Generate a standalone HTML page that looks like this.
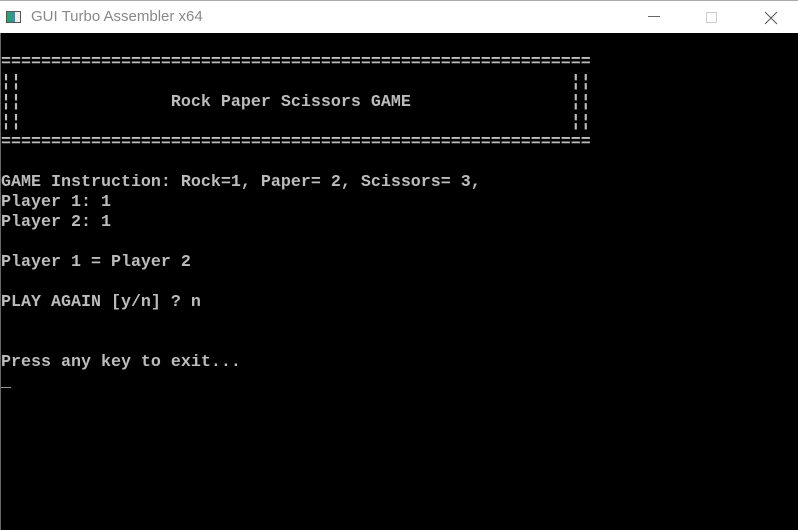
<!DOCTYPE html>
<html><head><style>
html,body{margin:0;padding:0;width:798px;height:530px;overflow:hidden;background:#000}
.tb{position:absolute;left:0;top:0;width:798px;height:33px;background:#fff;border-top:1px solid #aaa;box-sizing:border-box}
.tt{position:absolute;left:31px;top:7px;font:15px "Liberation Sans",sans-serif;color:#888}
.ic{position:absolute;left:6px;top:10px;width:15px;height:12px;border:1px solid #555;box-sizing:border-box;background:linear-gradient(90deg,#2a6 0,#48a 60%,#eee 60%)}
.con{position:absolute;left:0;top:33px;width:798px;height:497px;background:#000;border-left:1px solid #666;box-sizing:border-box}
pre{margin:0;position:absolute;left:0;top:0;font:bold 16.67px/20px "Liberation Mono",monospace;color:#bcbcbc;letter-spacing:0}
</style></head><body>
<div class="tb"><div class="ic"></div><div class="tt">GUI Turbo Assembler x64</div>
<div style="position:absolute;left:648px;top:15px;width:12px;height:1px;background:#666"></div>
<div style="position:absolute;left:706px;top:11px;width:11px;height:11px;border:1px solid #ccc;box-sizing:border-box"></div>
<svg style="position:absolute;left:764px;top:10px" width="14" height="14"><path d="M1 1L13 13M13 1L1 13" stroke="#555" stroke-width="1"/></svg>
</div>
<div class="con"><pre>&nbsp;
===========================================================
¦¦                                                       ¦¦
¦¦               Rock Paper Scissors GAME                ¦¦
¦¦                                                       ¦¦
===========================================================

GAME Instruction: Rock=1, Paper= 2, Scissors= 3,
Player 1: 1
Player 2: 1

Player 1 = Player 2

PLAY AGAIN [y/n] ? n


Press any key to exit...
_</pre></div>
</body></html>
